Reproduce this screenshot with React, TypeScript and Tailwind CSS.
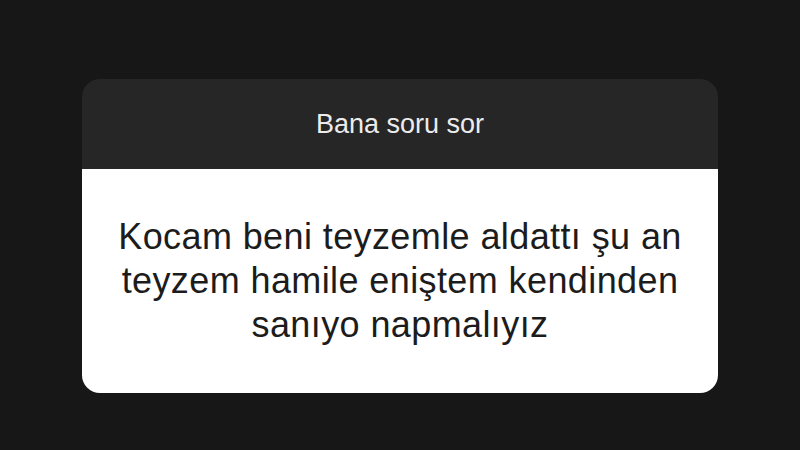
export default function App() {
  return (
    <div className="w-[800px] h-[450px] bg-[#171717] flex justify-center pt-[79px] font-['Liberation_Sans',Arial,sans-serif]">
      <div className="w-[636px] h-[314px] rounded-[18px] overflow-hidden flex flex-col">
        {/* Header */}
        <div className="h-[90px] bg-[#262626] flex items-center justify-center">
          <span className="text-[27px] text-[#ececec] leading-none">Bana soru sor</span>
        </div>
        {/* Question */}
        <div className="flex-1 bg-white flex items-center justify-center px-6">
          <p className="text-center text-[36px] leading-[44px] text-[#1c1c1c] tracking-[0.4px]">
            Kocam beni teyzemle aldattı şu an
            <br />
            teyzem hamile eniştem kendinden
            <br />
            sanıyo napmalıyız
          </p>
        </div>
      </div>
    </div>
  );
}
